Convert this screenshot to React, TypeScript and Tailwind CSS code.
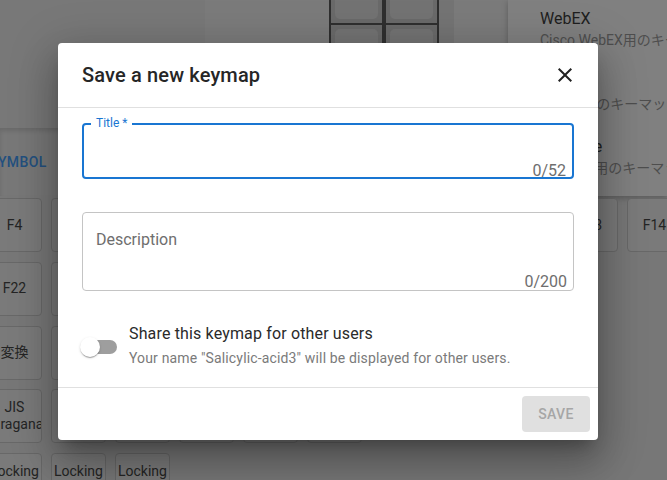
import React from "react";

const rows: string[][] = [
  ["F4", "F5", "F6", "F7", "F8", "F9", "F10", "F11", "F12", "F13", "F14"],
  ["F22", "F23", "F24", "Help", "Menu", "Select", "Stop", "Again"],
  ["変換", "無変換", "Kana", "¥", "Ro", "Hangul", "Hanja", "Lang"],
  ["JIS Hiragana", "JIS Kana", "Eisu", "Kana", "Zen", "Han"],
  ["Locking Caps", "Locking Num", "Locking Scroll"],
];

function Key({ label }: { label: string }) {
  return (
    <div className="w-[55px] h-[54px] shrink-0 rounded-[4px] border border-[#686868] bg-[#7a7a7a] flex items-center justify-center text-center text-[14px] leading-[17px] text-[#242424] overflow-hidden">
      <span className="w-[55px] whitespace-normal">{label}</span>
    </div>
  );
}

function TopKey() {
  return (
    <div className="w-[55px] h-[55px] border-2 border-[#2f2f2f] bg-[#6a6a6a] p-[4px]">
      <div className="w-full h-full rounded-[5px] bg-[#737373]" />
    </div>
  );
}

export default function App() {
  return (
    <div className="relative w-[667px] h-[480px] overflow-hidden bg-[#777777] font-['Roboto','Noto_Sans_CJK_JP',sans-serif]">
      {/* background page (dimmed) */}
      <div className="flex h-[196px]">
        <div className="flex flex-col w-[508px]">
          <div className="flex h-[128px]">
            <div className="w-[205px] bg-[#787878] shadow-[2px_0_4px_rgba(0,0,0,0.18)]" />
            <div className="w-[124px] bg-[#7b7b7b]" />
            <div className="flex flex-col -mt-[30px] bg-[#7b7b7b]">
              <div className="flex">
                <TopKey />
                <TopKey />
              </div>
              <div className="flex -mt-[2px]">
                <TopKey />
                <TopKey />
              </div>
            </div>
            <div className="w-[15px] bg-[#747474]" />
            <div className="flex-1 bg-[#7b7b7b]" />
          </div>
          <div className="flex-1 bg-[#787878] shadow-[inset_0_3px_4px_rgba(0,0,0,0.12)] flex items-center">
            <span className="-ml-[11px] text-[14px] font-medium tracking-[0.4px] text-[#23507f]">
              SYMBOL
            </span>
          </div>
        </div>
        <div className="w-[159px] bg-[#808080] shadow-[0_2px_6px_rgba(0,0,0,0.25)] pl-[32px] pt-[8px]">
          <div className="h-[64px]">
            <div className="text-[16px] leading-[22px] text-[#1e1e1e]">WebEX</div>
            <div className="text-[14px] leading-[20px] text-[#4e4e4e] whitespace-nowrap">
              Cisco WebEX用のキーマップ
            </div>
          </div>
          <div className="h-[64px]">
            <div className="text-[16px] leading-[22px] text-[#1e1e1e]">Zoom</div>
            <div className="text-[14px] leading-[20px] text-[#4e4e4e] whitespace-nowrap">
              Teams用のキーマップ
            </div>
          </div>
          <div className="h-[64px]">
            <div className="text-[16px] leading-[22px] text-[#1e1e1e] whitespace-nowrap">
              YouTube
            </div>
            <div className="text-[14px] leading-[20px] text-[#4e4e4e] whitespace-nowrap">
              YouTube用のキーマップ
            </div>
          </div>
        </div>
      </div>
      <div className="flex flex-col gap-[9.75px] pt-[2px] -ml-[13px]">
        {rows.map((r, i) => (
          <div key={i} className="flex gap-[9px]">
            {r.map((k) => (
              <Key key={k} label={k} />
            ))}
          </div>
        ))}
      </div>

      {/* dialog */}
      <div className="absolute left-[58px] top-[43px] w-[540px] rounded-[4px] bg-white shadow-[0_11px_15px_-7px_rgba(0,0,0,0.25),0_24px_38px_3px_rgba(0,0,0,0.2),0_9px_46px_8px_rgba(0,0,0,0.15)]">
        <div className="flex h-[64px] items-center justify-between pl-6 pr-[21px]">
          <h2 className="text-[20px] font-medium leading-[32px] tracking-[0.15px] text-[#262626]">
            Save a new keymap
          </h2>
          <svg width="24" height="24" viewBox="0 0 24 24" className="fill-[#212121]">
            <path d="M19 6.41 17.59 5 12 10.59 6.41 5 5 6.41 10.59 12 5 17.59 6.41 19 12 13.41 17.59 19 19 17.59 13.41 12z" />
          </svg>
        </div>
        <div className="border-t border-[#e0e0e0] px-6 pt-[15px] pb-[19px]">
          <div className="relative h-[56px] rounded-[4px] border-2 border-[#1976d2]">
            <span className="absolute left-[7px] -top-[9px] bg-white px-[5px] text-[12px] leading-[14px] text-[#1976d2]">
              Title *
            </span>
            <span className="absolute right-[6px] top-[34px] text-[16px] leading-[24px] text-[#6e6e6e]">
              0/52
            </span>
          </div>
          <div className="relative mt-[33px] h-[79px] rounded-[4px] border border-[#c4c4c4]">
            <span className="absolute left-[13px] top-[15px] text-[16px] leading-[24px] text-[#6e6e6e]">
              Description
            </span>
            <span className="absolute right-[6px] top-[57px] text-[16px] leading-[24px] text-[#6e6e6e]">
              0/200
            </span>
          </div>
          <div className="mt-[31px] -ml-[11px] flex items-start">
            <div className="relative mt-[6px] h-[38px] w-[58px] shrink-0">
              <div className="absolute left-[12px] top-[12px] h-[14px] w-[34px] rounded-full bg-[#9e9e9e]" />
              <div className="absolute left-[9px] top-[9px] h-[20px] w-[20px] rounded-full bg-white shadow-[0_2px_1px_-1px_rgba(0,0,0,0.2),0_1px_1px_0_rgba(0,0,0,0.14),0_1px_3px_0_rgba(0,0,0,0.12)]" />
            </div>
            <div className="flex flex-col">
              <span className="text-[16px] leading-[24px] tracking-[0.15px] text-[#2a2a2a]">
                Share this keymap for other users
              </span>
              <span className="mt-[2px] text-[14px] leading-[20px] tracking-[0.15px] text-[#7a7a7a]">
                Your name "Salicylic-acid3" will be displayed for other users.
              </span>
            </div>
          </div>
        </div>
        <div className="flex justify-end border-t border-[#e0e0e0] p-2">
          <div className="flex h-[36px] w-[68px] items-center justify-center rounded-[4px] bg-[#e0e0e0] text-[14px] font-medium tracking-[0.4px] text-[#a6a6a6]">
            SAVE
          </div>
        </div>
      </div>
    </div>
  );
}
